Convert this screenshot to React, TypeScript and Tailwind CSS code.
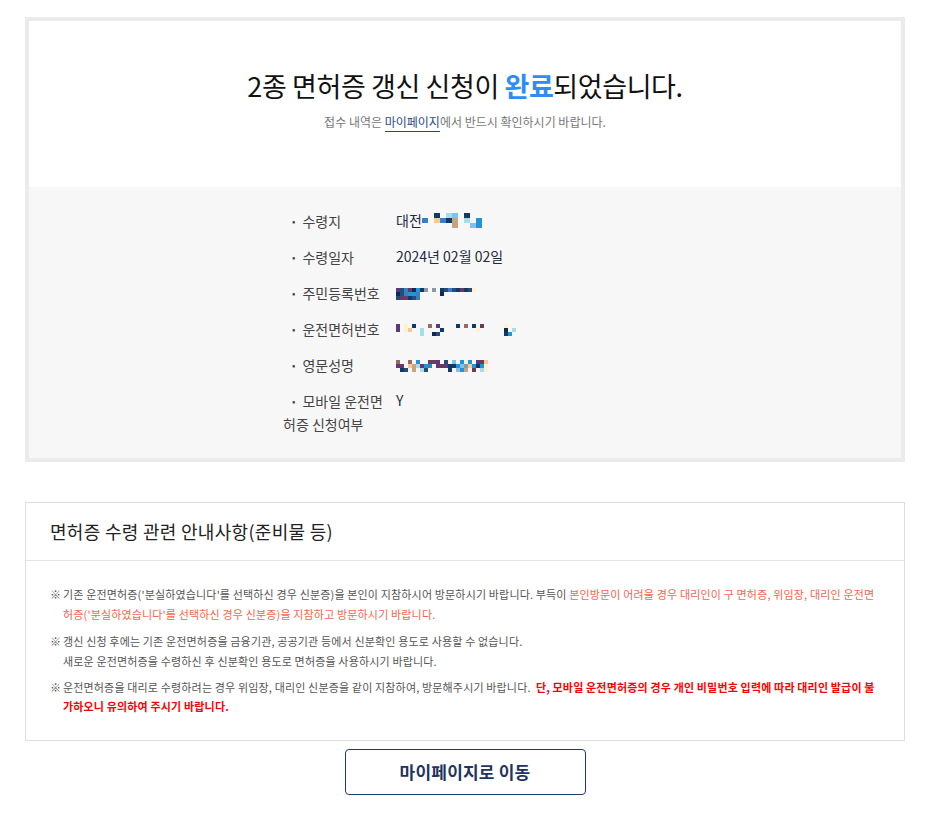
import React from "react";

const FONT = { fontFamily: "'Noto Sans CJK KR', 'Noto Sans', sans-serif" };

// masked (mosaic) values, drawn as tiny cell grids
const PALETTE = ["#0d3a66", "#7ec4ea", "#f5c99a", "#3a7fc4", "#c9a27e", "#a7dcec", "#fff2cc", "#5a3a78", "#0b2b52", "#9a6a5a", "#6d3a5e", "#1e96d8", "#8a9aa0", "#2a4a7a"];

function Mosaic({ rows, w = 6, h = 5 }: { rows: string[]; w?: number; h?: number }) {
  const cols = Math.max(...rows.map((r) => r.length));
  return (
    <svg width={cols * w} height={rows.length * h} className="inline-block align-middle">
      {rows.map((r, ri) =>
        r.split("").map((c, ci) =>
          c === "." ? null : (
            <rect key={ri + "-" + ci} x={ci * w} y={ri * h} width={w} height={h} fill={PALETTE[parseInt(c, 16)]} />
          )
        )
      )}
    </svg>
  );
}

function InfoRow({ label, children }: { label: string; children: React.ReactNode }) {
  return (
    <li className="flex items-start leading-[23px]">
      <span className="w-[113px] shrink-0 text-[14px] text-[#444] indent-[9px] break-all pr-[4px]">
        <span className="text-[10px] align-[2px] mr-[7px]">•</span>
        {label}
      </span>
      <span className="text-[14px] leading-[23px] text-[#1c2a44]">{children}</span>
    </li>
  );
}

function Note({ children, tight }: { children: React.ReactNode; tight?: boolean }) {
  return (
    <div className={`flex break-all ${tight ? "leading-[19px]" : "leading-[20px]"}`}>
      <span className="w-[13px] shrink-0">※</span>
      <p className="flex-1">{children}</p>
    </div>
  );
}

export default function App() {
  return (
    <div className="min-h-screen bg-white pt-[17px] pb-[24px]" style={FONT}>
      <div className="ml-[25px] w-[880px]">
        {/* result box */}
        <div className="border-[4px] border-[#ebebeb]">
          <div className="bg-white h-[166px] flex flex-col items-center pt-[45px]">
            <h1 className="text-[27px] leading-[40px] text-[#111] tracking-[-0.4px]">
              2종 면허증 갱신 신청이 <span className="text-[#2f8cf5] font-bold">완료</span>되었습니다.
            </h1>
            <p className="mt-[7px] text-[12px] leading-[18px] text-[#777]">
              접수 내역은{" "}
              <span className="text-[#2a4a8a] border-b border-[#1e4a9a] pb-[1px]">마이페이지</span>
              에서 반드시 확인하시기 바랍니다.
            </p>
          </div>
          <div className="bg-[#f7f7f7] h-[271px] pt-[22px]">
            <ul className="w-[364px] mx-auto flex flex-col gap-[12px]">
              <InfoRow label="수령지">
                <span className="inline-flex items-center">
                  대전
                  <Mosaic w={6} h={5} rows={["..0.51.0..", "3.2304.5.b", ".....4..1b"]} />
                </span>
              </InfoRow>
              <InfoRow label="수령일자">2024년 02월 02일</InfoRow>
              <InfoRow label="주민등록번호">
                <Mosaic w={4} h={4} rows={["7d3a8b0c.c.0d3d0a0d6", "8d3bb3.....8........", "d7a0d3.............."]} />
              </InfoRow>
              <InfoRow label="운전면허번호">
                <Mosaic w={4} h={4} rows={["7.6.0...9.7....0.9.0.a.....6...", "7.62..5....0........6......8.5.", "......5..8d................0b.."]} />
              </InfoRow>
              <InfoRow label="영문성명">
                <Mosaic w={4} h={4} rows={["9..9.b..aa7.d.1.b6b.7a2", "7a.2457b3.7a700b1c2b0b6", ".0d.4.5d.....0.1b4.a.56"]} />
              </InfoRow>
              <InfoRow label="모바일 운전면허증 신청여부">Y</InfoRow>
            </ul>
          </div>
        </div>

        {/* notice box */}
        <div className="mt-[40px] border border-[#dddddd] bg-white">
          <div className="h-[58px] flex items-center px-[24px] border-b border-[#e3e3e3]">
            <h2 className="text-[18px] text-[#222] tracking-[0.3px]">면허증 수령 관련 안내사항(준비물 등)</h2>
          </div>
          <div className="px-[24px] pt-[23px] pb-[24px] flex flex-col gap-[7px] text-[11px] text-[#555] tracking-[0.16px]">
            <Note>
              기존 운전면허증('분실하였습니다'를 선택하신 경우 신분증)을 본인이 지참하시어 방문하시기 바랍니다. 부득이{" "}
              <span className="text-[#f6654b]">
                본인방문이 어려울 경우 대리인이 구 면허증, 위임장, 대리인 운전면허증('분실하였습니다'를 선택하신 경우 신분증)을 지참하고 방문하시기 바랍니다.
              </span>
            </Note>
            <Note>
              갱신 신청 후에는 기존 운전면허증을 금융기관, 공공기관 등에서 신분확인 용도로 사용할 수 없습니다.
              <br />
              새로운 운전면허증을 수령하신 후 신분확인 용도로 면허증을 사용하시기 바랍니다.
            </Note>
            <Note tight>
              운전면허증을 대리로 수령하려는 경우 위임장, 대리인 신분증을 같이 지참하여, 방문해주시기 바랍니다.&nbsp;{" "}
              <span className="text-[#ff0000] font-bold">
                단, 모바일 운전면허증의 경우 개인 비밀번호 입력에 따라 대리인 발급이 불가하오니 유의하여 주시기 바랍니다.
              </span>
            </Note>
          </div>
        </div>

        <div className="flex justify-center mt-[8px]">
          <button className="w-[241px] h-[46px] border border-[#1b3c73] rounded-[4px] bg-white text-[17px] font-bold text-[#1e3560] tracking-[0.2px]">
            마이페이지로 이동
          </button>
        </div>
      </div>
    </div>
  );
}
